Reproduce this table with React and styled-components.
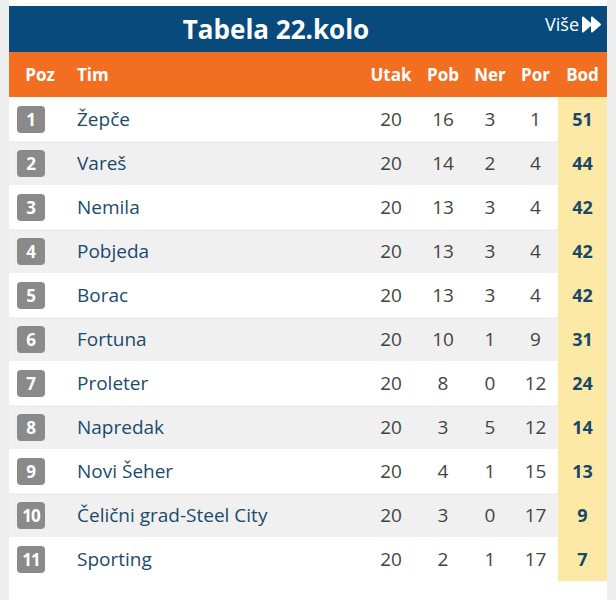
import React from "react";
import styled, { createGlobalStyle } from "styled-components";

const Global = createGlobalStyle`
  html, body { margin: 0; padding: 0; background: #f1f1f1; }
  body { font-family: "Open Sans", "Noto Sans", sans-serif; }
`;

const Page = styled.div`
  width: 616px;
  height: 600px;
  background: #eeeeee;
  padding: 0 9px 0 9px;
  box-sizing: border-box;
`;

const Card = styled.div`
  background: #ffffff;
  height: 600px;
  padding-top: 6px;
  box-sizing: border-box;
`;

const TitleBar = styled.div`
  height: 46px;
  background: #074a7b;
  display: flex;
  align-items: center;
  justify-content: center;
  position: relative;
  color: #fff;
`;

const Title = styled.h1`
  margin: 0 64px 0 0;
  font-size: 26px;
  font-weight: 700;
`;

const More = styled.a`
  position: absolute;
  right: 6px;
  top: 6px;
  display: flex;
  align-items: center;
  gap: 3px;
  color: #fff;
  font-size: 18px;
  text-decoration: none;
`;

const cols = "58px 1fr 56px 48px 46px 45px 49px";

const HeadRow = styled.div`
  display: grid;
  grid-template-columns: ${cols};
  height: 45px;
  align-items: center;
  background: #f26f22;
  color: #fff;
  font-weight: 700;
  font-size: 17px;
`;

const HCell = styled.div`
  text-align: ${(p) => (p.$left ? "left" : "center")};
  padding-left: ${(p) => (p.$left ? "10px" : p.$pad || "0")};
`;

const Row = styled.div`
  display: grid;
  grid-template-columns: ${cols};
  height: 44px;
  align-items: center;
  background: ${(p) => (p.$alt ? "#f0f0f0" : "#ffffff")};
`;

const PosCell = styled.div`
  padding-left: 8px;
  display: flex;
`;

const Badge = styled.span`
  width: 28px;
  height: 27px;
  border-radius: 4px;
  background: #8a8a8a;
  color: #fff;
  font-weight: 700;
  font-size: 17px;
  display: flex;
  align-items: center;
  justify-content: center;
  letter-spacing: ${(p) => (p.$wide ? "-1px" : "0")};
`;

const Name = styled.div`
  color: #1c4a6c;
  font-size: 19px;
  padding-left: 10px;
  white-space: nowrap;
`;

const Num = styled.div`
  text-align: center;
  color: #444;
  font-size: 19px;
`;

const Points = styled.div`
  align-self: stretch;
  display: flex;
  align-items: center;
  justify-content: center;
  background: #fde9a6;
  color: #17486a;
  font-weight: 700;
  font-size: 18px;
`;

const data = [
  ["Žepče", 20, 16, 3, 1, 51],
  ["Vareš", 20, 14, 2, 4, 44],
  ["Nemila", 20, 13, 3, 4, 42],
  ["Pobjeda", 20, 13, 3, 4, 42],
  ["Borac", 20, 13, 3, 4, 42],
  ["Fortuna", 20, 10, 1, 9, 31],
  ["Proleter", 20, 8, 0, 12, 24],
  ["Napredak", 20, 3, 5, 12, 14],
  ["Novi Šeher", 20, 4, 1, 15, 13],
  ["Čelični grad-Steel City", 20, 3, 0, 17, 9],
  ["Sporting", 20, 2, 1, 17, 7],
];

const FastForward = () => (
  <svg width="19" height="17" viewBox="0 0 19 17" aria-hidden="true">
    <path d="M1 1.5 L9 8.5 L1 15.5 Z" fill="#fff" stroke="#fff" strokeWidth="2" strokeLinejoin="round" />
    <path d="M10 1.5 L18 8.5 L10 15.5 Z" fill="#fff" stroke="#fff" strokeWidth="2" strokeLinejoin="round" />
  </svg>
);

export default function App() {
  return (
    <>
      <Global />
      <Page>
        <Card>
          <TitleBar>
            <Title>Tabela 22.kolo</Title>
            <More href="#">
              Više <FastForward />
            </More>
          </TitleBar>
          <HeadRow>
            <HCell $pad="4px">Poz</HCell>
            <HCell $left>Tim</HCell>
            <HCell>Utak</HCell>
            <HCell>Pob</HCell>
            <HCell>Ner</HCell>
            <HCell>Por</HCell>
            <HCell>Bod</HCell>
          </HeadRow>
          {data.map((r, i) => (
            <Row key={r[0]} $alt={i % 2 === 1}>
              <PosCell>
                <Badge $wide={i >= 9}>{i + 1}</Badge>
              </PosCell>
              <Name>{r[0]}</Name>
              <Num>{r[1]}</Num>
              <Num>{r[2]}</Num>
              <Num>{r[3]}</Num>
              <Num>{r[4]}</Num>
              <Points>{r[5]}</Points>
            </Row>
          ))}
        </Card>
      </Page>
    </>
  );
}
